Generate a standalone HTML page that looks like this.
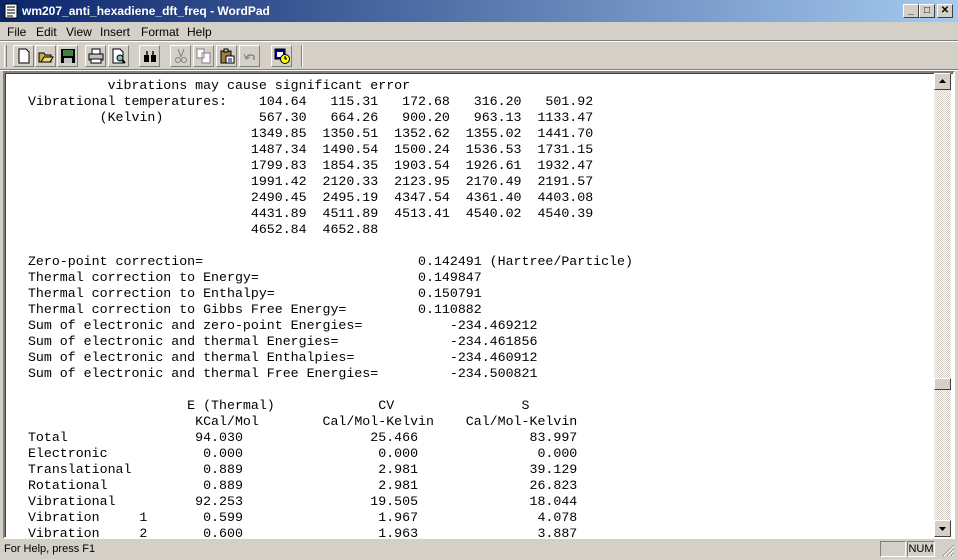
<!DOCTYPE html>
<html><head><style>
*{margin:0;padding:0;box-sizing:border-box}
body{width:958px;height:559px;background:#d4d0c8;position:relative;overflow:hidden;font-family:"Liberation Sans",sans-serif}
.abs{position:absolute}
#title{left:0;top:0;width:958px;height:22px;background:linear-gradient(90deg,#0a246a,#a6caf0);}
#title span{position:absolute;left:22px;top:4px;color:#fff;font-weight:bold;font-size:12px}
.cb{position:absolute;top:4px;width:16px;height:14px;background:#d4d0c8;border:1px solid;border-color:#fff #404040 #404040 #fff;font-size:10px;font-weight:bold;text-align:center;line-height:12px;color:#000}
#menu{left:0;top:22px;height:18px;font-size:12px}
#menu span{position:absolute;top:3px}
.tb{position:absolute;top:45px;width:21px;height:22px;border:1px solid;border-color:#fff #808080 #808080 #fff}
.tb svg{position:absolute;left:2px;top:2px}
#doc{left:3px;top:71px;width:952px;height:468px;background:#fff;border:2px solid;border-color:#808080 #fff #fff #808080;box-shadow:inset 1px 1px 0 #404040}
pre{position:absolute;left:15px;top:5px;font-family:"Liberation Mono","Courier New",monospace;font-size:13.28px;line-height:16px;color:#000}
#sb{left:934px;top:73px;width:17px;height:464px;background:repeating-conic-gradient(#d4d0c8 0 25%,#fff 0 50%) 0 0/2px 2px}
.sbb{position:absolute;left:0;width:17px;height:17px;background:#d4d0c8;border:1px solid;border-color:#fff #404040 #404040 #fff}
#status{left:0;top:540px;width:958px;height:19px;font-size:11px}
</style></head><body>
<div id="title" class="abs">
<svg class="abs" style="left:4px;top:3px" width="14" height="16"><rect x="1" y="1" width="12" height="14" fill="#fff" stroke="#000"/><path d="M3 4h8M3 7h8M3 10h8M3 13h6" stroke="#000"/></svg>
<span>wm207_anti_hexadiene_dft_freq - WordPad</span>
<div class="cb" style="left:903px">_</div><div class="cb" style="left:919px">□</div><div class="cb" style="left:937px">✕</div>
</div>
<div id="menu" class="abs"><span style="left:7px">File</span><span style="left:36px">Edit</span><span style="left:66px">View</span><span style="left:100px">Insert</span><span style="left:141px">Format</span><span style="left:187px">Help</span></div>
<div class="abs" style="left:0;top:40px;width:958px;height:1px;background:#808080"></div>
<div class="abs" style="left:0;top:41px;width:958px;height:1px;background:#fff"></div>
<div class="abs" style="left:4px;top:45px;width:3px;height:22px;border-left:1px solid #fff;border-right:1px solid #808080"></div>
<div class="tb" style="left:13px"><svg width="16" height="16"><path d="M3 1h7l3 3v11H3z" fill="#fff" stroke="#000"/></svg></div>
<div class="tb" style="left:35px"><svg width="16" height="16"><path d="M1 5h5l1 2h6v7H1z" fill="#c8b040" stroke="#000"/><path d="M3 14l3-5h9l-3 5z" fill="#e8d870" stroke="#000"/></svg></div>
<div class="tb" style="left:57px"><svg width="16" height="16"><rect x="1" y="1" width="14" height="14" fill="#000"/><rect x="3" y="2" width="10" height="6" fill="#408040"/><rect x="4" y="10" width="8" height="5" fill="#c0c0c0"/></svg></div>
<div class="tb" style="left:85px"><svg width="16" height="16"><rect x="4" y="1" width="8" height="5" fill="#fff" stroke="#000"/><rect x="1" y="6" width="14" height="6" fill="#c0c0c0" stroke="#000"/><rect x="3" y="11" width="10" height="4" fill="#fff" stroke="#000"/></svg></div>
<div class="tb" style="left:108px"><svg width="16" height="16"><path d="M2 1h7l3 3v11H2z" fill="#fff" stroke="#000"/><circle cx="9" cy="10" r="3" fill="#80c0c0" stroke="#000"/><path d="M11 12l3 3" stroke="#000" stroke-width="2"/></svg></div>
<div class="tb" style="left:139px"><svg width="16" height="16"><path d="M2 7h5v7H2zM9 7h5v7H9z" fill="#000"/><path d="M4 3h2v4H4zM10 3h2v4h-2z" fill="#404040"/></svg></div>
<div class="tb" style="left:170px"><svg width="16" height="16"><path d="M5 1l3 8M11 1l-3 8" stroke="#808080"/><circle cx="5" cy="12" r="2.5" fill="none" stroke="#808080"/><circle cx="11" cy="12" r="2.5" fill="none" stroke="#808080"/></svg></div>
<div class="tb" style="left:193px"><svg width="16" height="16"><path d="M1 1h7v9H1zM6 5h8v10H6z" fill="#fff" stroke="#808080"/></svg></div>
<div class="tb" style="left:216px"><svg width="16" height="16"><rect x="2" y="3" width="10" height="12" fill="#a08040" stroke="#000"/><rect x="5" y="1" width="4" height="3" fill="#c0c0c0" stroke="#000"/><rect x="7" y="8" width="8" height="7" fill="#fff" stroke="#000"/><path d="M9 11h4M9 13h4" stroke="#000080"/></svg></div>
<div class="tb" style="left:239px"><svg width="16" height="16"><path d="M4 10q3-5 8-2l0 4" fill="none" stroke="#808080" stroke-width="1.5"/><path d="M2 6l2 5 4-2" fill="none" stroke="#808080"/></svg></div>
<div class="tb" style="left:271px"><svg width="16" height="16"><rect x="1" y="1" width="10" height="10" fill="#000080" stroke="#000"/><rect x="3" y="4" width="6" height="5" fill="#fff"/><circle cx="11" cy="11" r="4.5" fill="#ffff00" stroke="#000"/><path d="M11 8v3h2" stroke="#000"/></svg></div>
<div class="abs" style="left:301px;top:45px;width:2px;height:22px;border-left:1px solid #808080;border-right:1px solid #fff"></div>
<div class="abs" style="left:0;top:69px;width:958px;height:1px;background:#808080"></div>
<div class="abs" style="left:0;top:70px;width:958px;height:1px;background:#fff"></div>
<div id="doc" class="abs"><pre>           vibrations may cause significant error
 Vibrational temperatures:    104.64   115.31   172.68   316.20   501.92
          (Kelvin)            567.30   664.26   900.20   963.13  1133.47
                             1349.85  1350.51  1352.62  1355.02  1441.70
                             1487.34  1490.54  1500.24  1536.53  1731.15
                             1799.83  1854.35  1903.54  1926.61  1932.47
                             1991.42  2120.33  2123.95  2170.49  2191.57
                             2490.45  2495.19  4347.54  4361.40  4403.08
                             4431.89  4511.89  4513.41  4540.02  4540.39
                             4652.84  4652.88

 Zero-point correction=                           0.142491 (Hartree/Particle)
 Thermal correction to Energy=                    0.149847
 Thermal correction to Enthalpy=                  0.150791
 Thermal correction to Gibbs Free Energy=         0.110882
 Sum of electronic and zero-point Energies=           -234.469212
 Sum of electronic and thermal Energies=              -234.461856
 Sum of electronic and thermal Enthalpies=            -234.460912
 Sum of electronic and thermal Free Energies=         -234.500821

                     E (Thermal)             CV                S
                      KCal/Mol        Cal/Mol-Kelvin    Cal/Mol-Kelvin
 Total                94.030                25.466              83.997
 Electronic            0.000                 0.000               0.000
 Translational         0.889                 2.981              39.129
 Rotational            0.889                 2.981              26.823
 Vibrational          92.253                19.505              18.044
 Vibration     1       0.599                 1.967               4.078
 Vibration     2       0.600                 1.963               3.887</pre></div>
<div id="sb" class="abs">
<div class="sbb" style="top:0"><svg width="15" height="15"><path d="M4 9h7l-3.5-4z" fill="#000"/></svg></div>
<div class="sbb" style="top:305px;height:12px"></div>
<div class="sbb" style="top:447px"><svg width="15" height="15"><path d="M4 6h7l-3.5 4z" fill="#000"/></svg></div>
</div>
<div id="status" class="abs">
<span class="abs" style="left:4px;top:3px">For Help, press F1</span>
<div class="abs" style="left:880px;top:1px;width:26px;height:16px;border:1px solid;border-color:#808080 #fff #fff #808080"></div>
<div class="abs" style="left:907px;top:1px;width:28px;height:16px;border:1px solid;border-color:#808080 #fff #fff #808080;text-align:center;line-height:14px">NUM</div>
<svg class="abs" style="left:941px;top:3px" width="14" height="14"><path d="M13 2L2 13M13 6L6 13M13 10L10 13" stroke="#808080"/><path d="M13 3L3 13M13 7L7 13M13 11L11 13" stroke="#fff"/></svg>
</div>
</body></html>
